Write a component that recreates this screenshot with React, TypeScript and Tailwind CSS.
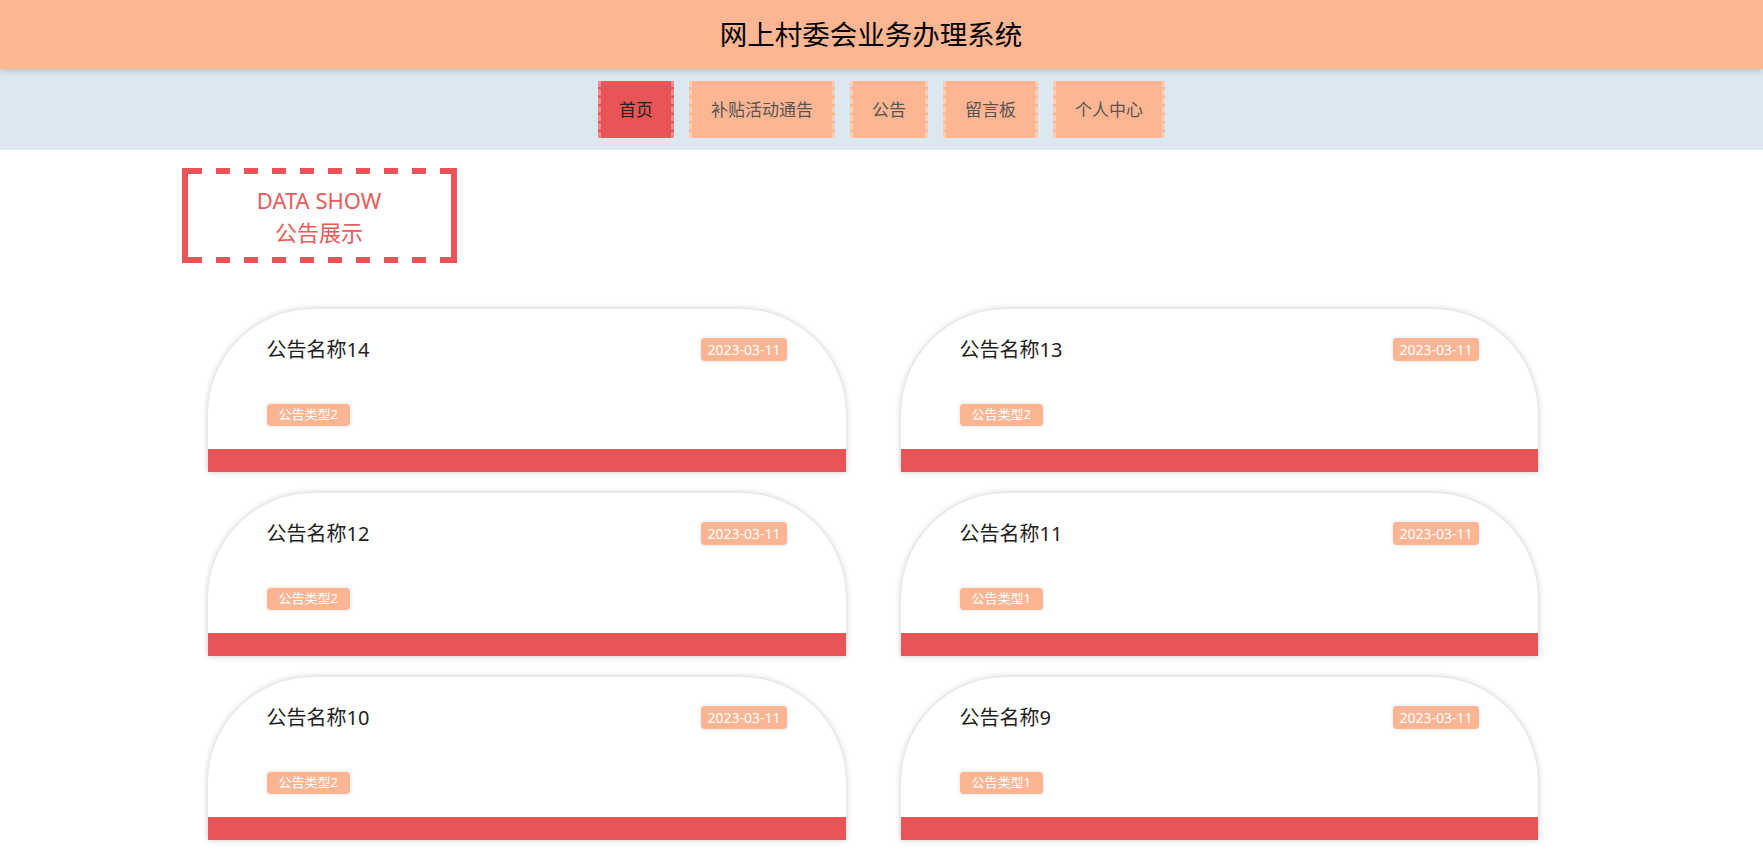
import React from "react"

const notices = [
  { title: "公告名称14", type: "公告类型2", date: "2023-03-11" },
  { title: "公告名称13", type: "公告类型2", date: "2023-03-11" },
  { title: "公告名称12", type: "公告类型2", date: "2023-03-11" },
  { title: "公告名称11", type: "公告类型1", date: "2023-03-11" },
  { title: "公告名称10", type: "公告类型2", date: "2023-03-11" },
  { title: "公告名称9", type: "公告类型1", date: "2023-03-11" },
]

const menu = ["首页", "补贴活动通告", "公告", "留言板", "个人中心"]

function NoticeCard({ title, type, date }: { title: string; type: string; date: string }) {
  return (
    <div className="flex flex-col h-[163px] bg-white rounded-t-[105px] shadow-[0_0_6px_rgba(0,0,0,0.22)] overflow-hidden">
      <div className="flex items-center justify-between h-[23px] mt-[29px] px-[59px]">
        <span className="text-[20px] leading-none text-[#222]">{title}</span>
        <span className="h-[23px] px-[6px] flex items-center rounded-[4px] bg-[#fcb593] text-white text-[14px] shadow-[0_0_4px_rgba(0,0,0,0.15)]">
          {date}
        </span>
      </div>
      <div className="mt-[43px] px-[59px] flex">
        <span className="h-[22px] px-[12px] flex items-center rounded-[4px] bg-[#fcb593] text-white text-[13px] shadow-[0_0_4px_rgba(0,0,0,0.15)]">
          {type}
        </span>
      </div>
      <div className="mt-auto h-[23px] bg-[#e95556]" />
    </div>
  )
}

export default function App() {
  return (
    <div className="min-h-screen bg-white font-['Noto_Sans','Noto_Sans_CJK_SC',sans-serif]">
      {/* 顶部标题 */}
      <header className="relative z-10 h-[69px] bg-[#feb592] flex items-center justify-center pr-[21px] shadow-[0_2px_6px_rgba(0,0,0,0.18)]">
        <h1 className="text-[27.5px] font-normal text-black">网上村委会业务办理系统</h1>
      </header>

      {/* 导航 */}
      <nav className="bg-[#dce8f0] pt-[12px] pb-[12px] flex justify-center gap-[15px]">
        {menu.map((m, i) => (
          <div
            key={m}
            className={
              i === 0
                ? "h-[57px] px-[18px] flex items-center border-x-[3px] border-dashed border-[#f08a90] bg-[#e95556] text-[17px] text-[#222]"
                : "h-[57px] px-[19px] flex items-center border-x-[3px] border-dashed border-[#fbcfb8] bg-[#feb592] text-[17px] text-[#555]"
            }
          >
            {m}
          </div>
        ))}
      </nav>

      {/* 内容 */}
      <div className="w-[1400px] mx-auto pt-[18px] pb-[20px]">
        {/* 标题框：上下为虚线，左右为实线 */}
        <div className="w-[275px] h-[95px] border-x-[6px] border-[#e95556] flex flex-col">
          <div className="h-[6px] bg-[repeating-linear-gradient(90deg,#e95556_0px,#e95556_14px,transparent_14px,transparent_28px)]" />
          <div className="flex-1 flex flex-col items-center justify-center text-[#e85b5b] text-[22px] leading-[32px]">
            <div>DATA SHOW</div>
            <div>公告展示</div>
          </div>
          <div className="h-[6px] bg-[repeating-linear-gradient(90deg,#e95556_0px,#e95556_14px,transparent_14px,transparent_28px)]" />
        </div>

        <div className="mt-[46px] ml-[26px] grid grid-cols-[638px_637px] gap-x-[55px] gap-y-[21px]">
          {notices.map((n) => (
            <NoticeCard key={n.title} {...n} />
          ))}
        </div>
      </div>
    </div>
  )
}
